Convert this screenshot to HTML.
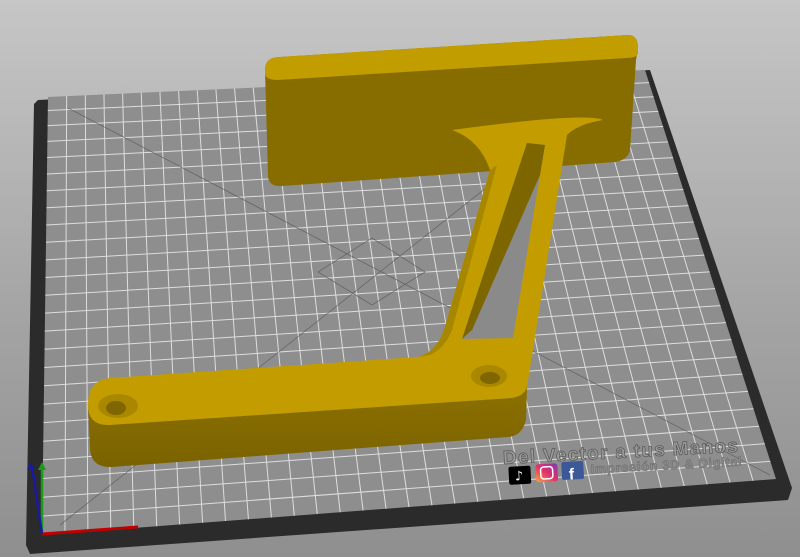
<!DOCTYPE html>
<html><head><meta charset="utf-8"><style>
html,body{margin:0;padding:0;width:800px;height:557px;overflow:hidden}
body{background:linear-gradient(#c6c6c6,#a5a5a5 55%,#8f8f8f)}
svg{position:absolute;left:0;top:0}
</style></head><body>
<svg id="s" width="800" height="557" viewBox="0 0 800 557" xmlns="http://www.w3.org/2000/svg">
<defs>
<linearGradient id="ig" x1="0" y1="1" x2="1" y2="0"><stop offset="0" stop-color="#f9a43a"/><stop offset=".5" stop-color="#e1306c"/><stop offset="1" stop-color="#833ab4"/></linearGradient>
<linearGradient id="bf" x1="0" y1="0" x2="0" y2="1"><stop offset="0" stop-color="#8c7100"/><stop offset="1" stop-color="#7a6200"/></linearGradient>
</defs>
<polygon points="38,100 650,70 792,488 788,500 30,554 26,545 34,104" fill="#2b2b2b"/>
<polygon points="48,97 645,70 776,479 42,535" fill="#8e8e8e"/>
<g id="grid" stroke="#e6e6e6" stroke-width="1" opacity="0.9"></g>
<g stroke="#555" stroke-width="0.8" opacity="0.7" fill="none">
<line x1="68" y1="108" x2="770" y2="475"/>
<line x1="625" y1="78" x2="60" y2="525"/>
<polygon points="372,238 425,272 372,305 318,272"/>
</g>
<line x1="42" y1="534" x2="138" y2="527" stroke="#c00000" stroke-width="3"/>
<line x1="42" y1="534" x2="42" y2="467" stroke="#1a9a1a" stroke-width="2.5"/>
<line x1="42" y1="534" x2="32" y2="467" stroke="#1a1aa0" stroke-width="2.5"/>
<polygon points="42,462 38,470 46,470" fill="#1a9a1a"/>
<polygon points="31,462 27,470 35,470" fill="#1a1aa0"/>
<path d="M265,70 Q265,57 280,57 L628,35 Q638,35 638,48 L636,60 L630,150 Q628,160 615,162 L480,172 L282,186 Q268,187 268,175 Z" fill="#876d00"/>
<path d="M265,70 Q265,57 280,57 L628,35 Q638,35 638,48 L638,54 Q636,58 626,58 L278,80 Q266,80 265,74 Z" fill="#c29d00"/>
<path d="M452,130 Q585,112 603,120 Q578,124 567,135 L527,387 Q524,396 512,398 L110,425 Q88,426 88,405 Q88,380 110,378 L418,357 Q436,352 444,330 L490,170 Q480,140 452,130 Z" fill="#c39d00"/>
<path d="M88,405 Q88,426 110,425 L512,398 Q524,396 527,387 L526,420 Q522,436 508,437 L112,467 Q92,468 90,450 Z" fill="url(#bf)"/>
<path d="M490,170 L444,330 Q436,352 418,357 L430,355 Q445,348 452,330 L497,165 Z" fill="#a88700"/>
<polygon points="527,143 545,145 513,338 462,339" fill="#8a8a8a"/>
<polygon points="527,143 545,145 540,175 472,330 462,339" fill="#7d6500"/>
<ellipse cx="118" cy="406" rx="20" ry="12" fill="#a98800"/>
<ellipse cx="116" cy="408" rx="10" ry="7" fill="#7f6600"/>
<ellipse cx="489" cy="376" rx="18" ry="11" fill="#a98800"/>
<ellipse cx="490" cy="378" rx="10" ry="6" fill="#7f6600"/>
<g transform="rotate(-3 505 460)">
<text x="503" y="464" font-family="Liberation Sans, sans-serif" font-weight="bold" font-size="19" fill="#9a9a9a" stroke="#555" stroke-width="0.7" letter-spacing="1.3">Del Vector a tus Manos</text>
<text x="590" y="478" font-family="Liberation Sans, sans-serif" font-weight="bold" font-size="13" fill="#8a8a8a" stroke="#666" stroke-width="0.4" letter-spacing="0.6">Impresión 3D &amp; Digital</text>
<rect x="508" y="467" width="22" height="18" rx="2" fill="#000"/>
<text x="514" y="481" font-family="DejaVu Sans, sans-serif" font-weight="bold" font-size="13" fill="#fff">♪</text>
<rect x="535" y="466" width="22" height="18" rx="3" fill="url(#ig)"/>
<rect x="540" y="469" width="12" height="12" rx="3" fill="none" stroke="#fff" stroke-width="1.5"/>
<rect x="561" y="465" width="22" height="18" rx="2" fill="#3b5998"/>
<text x="568" y="483" font-family="Liberation Sans, sans-serif" font-weight="bold" font-size="16" fill="#fff">f</text>
</g>
</svg>
<script>
var g=document.getElementById('grid'),ns='http://www.w3.org/2000/svg';
var TL=[48,97],TR=[645,70],BR=[776,479],BL=[42,535];
function L(a,b,t){return [a[0]+(b[0]-a[0])*t,a[1]+(b[1]-a[1])*t];}
function ln(p,q){var l=document.createElementNS(ns,'line');l.setAttribute('x1',p[0]);l.setAttribute('y1',p[1]);l.setAttribute('x2',q[0]);l.setAttribute('y2',q[1]);g.appendChild(l);}
var N=32;
for(var i=1;i<N;i++){var t=i/N;ln(L(TL,TR,t),L(BL,BR,t));}
var M=25;
for(var j=1;j<M;j++){var u=Math.pow(j/M,1.08);ln(L(TL,BL,u),L(TR,BR,u));}
</script>
</body></html>
